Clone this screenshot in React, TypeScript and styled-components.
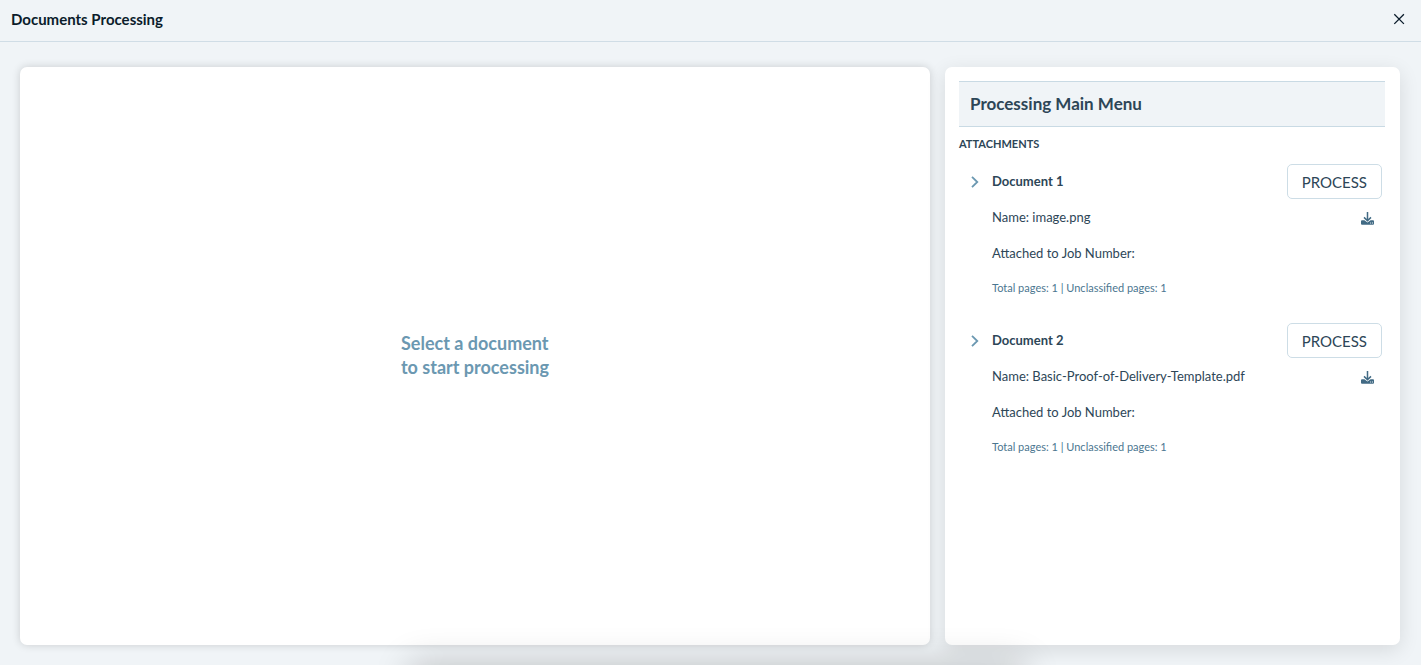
import React from "react";
import styled, { createGlobalStyle } from "styled-components";

const GlobalStyle = createGlobalStyle`
  * { box-sizing: border-box; }
  body {
    margin: 0;
    background: #f0f4f7;
    color: #2d4657;
    font-family: Lato, "Liberation Sans", sans-serif;
    font-size: 13px;
    line-height: 18px;
  }
  h1, h2, h3, p, ul { margin: 0; padding: 0; }
`;

const Page = styled.div`
  display: flex;
  flex-direction: column;
  min-height: 100vh;
  overflow: hidden;
  position: relative;

  /* Shadow of the drawer docked under the bottom edge */
  &::after {
    content: "";
    position: absolute;
    top: 100%;
    left: 29%;
    right: 28%;
    height: 60px;
    box-shadow: 0 0 36px 2px rgba(0, 0, 0, 0.2);
    pointer-events: none;
  }
`;

const Header = styled.header`
  display: flex;
  align-items: center;
  justify-content: space-between;
  height: 42px;
  padding: 0 14px 4px 11px;
  border-bottom: 1px solid #d0dde6;
`;

const Title = styled.h1`
  color: #0b1c2b;
  font-size: 15px;
  font-weight: 700;
`;

const IconButton = styled.button<{ $color: string }>`
  display: flex;
  padding: 0;
  border: 0;
  background: none;
  color: ${(p) => p.$color};
  cursor: pointer;
`;

const Main = styled.main`
  flex: 1;
  display: grid;
  grid-template-columns: 2fr 1fr;
  gap: 15px;
  padding: 25px 21px 20px 20px;
`;

const Panel = styled.section<{ $shadow: string }>`
  min-width: 0;
  border-radius: 7px;
  background: #fff;
  box-shadow: ${(p) => p.$shadow};
`;

const Viewer = styled(Panel)`
  display: flex;
  align-items: center;
  justify-content: center;
  padding-bottom: 2px;
`;

const Hint = styled.p`
  color: #6b98b1;
  font-size: 18px;
  font-weight: 700;
  line-height: 24px;
`;

const Menu = styled(Panel)`
  padding: 14px 15px 14px 14px;
`;

const MenuTitle = styled.h2`
  padding: 11px;
  border: solid #c9dae4;
  border-width: 1px 0;
  background: #f0f4f7;
  font-size: 17px;
  line-height: 22px;
`;

const SectionLabel = styled.h3`
  padding-top: 8px;
  font-size: 11px;
  text-transform: uppercase;
`;

const DocumentList = styled.ul`
  padding-top: 10px;
  list-style: none;
`;

const DocumentItem = styled.li`
  display: grid;
  grid-template-columns: 33px 1fr auto;
  grid-auto-rows: 36px;
  align-items: center;
  padding: 0 3px 15px 0;
`;

const Toggle = styled(IconButton)`
  padding: 1px 0 0 11px;
`;

const DocumentName = styled.h3`
  font-size: 13px;
`;

const Detail = styled.p`
  grid-column: 2;
`;

const PageCount = styled.p`
  grid-column: 2;
  padding-bottom: 2px;
  color: #4b7690;
  font-size: 11px;
`;

const ProcessButton = styled.button`
  align-self: end;
  height: 35px;
  padding: 0 14px;
  border: 1px solid #cddde6;
  border-radius: 5px;
  background: #fff;
  color: #2d4657;
  font: 400 15px Lato, "Liberation Sans", sans-serif;
  cursor: pointer;
`;

const Download = styled(IconButton)`
  justify-self: end;
  padding: 3px 8px 0 0;
`;

const CloseIcon = () => (
  <svg width="16" height="16" viewBox="0 0 16 16" fill="none" stroke="currentColor" strokeWidth="1.3">
    <path d="M3.3 3.3l9.6 9.6M12.9 3.3l-9.6 9.6" />
  </svg>
);

const ChevronIcon = () => (
  <svg width="10" height="12" viewBox="0 0 10 12" fill="none" stroke="currentColor" strokeWidth="1.8">
    <path d="M2 .8l5.3 5.2-5.3 5.2" />
  </svg>
);

const DownloadIcon = () => (
  <svg width="13" height="13" viewBox="0 0 13 13" fill="none">
    <path
      fill="currentColor"
      fillRule="evenodd"
      d="M1 8.3h2.4l3.1 2.3 3.1-2.3H12a1 1 0 0 1 1 1v2.5a1 1 0 0 1-1 1H1a1 1 0 0 1-1-1V9.300a1 1 0 0 1 1-1zm8.200 2.200v.9h.9v-.9zm1.800 0v.9h.9v-.9z"
    />
    <path d="M6.500 0v8.500M3 5.400l3.500 3.300 3.500-3.300" stroke="currentColor" strokeWidth="1.500" />
  </svg>
);

const documents = [
  { title: "Document 1", file: "image.png", total: 1, unclassified: 1 },
  { title: "Document 2", file: "Basic-Proof-of-Delivery-Template.pdf", total: 1, unclassified: 1 },
];

export default function App() {
  return (
    <Page>
      <GlobalStyle />
      <Header>
        <Title>Documents Processing</Title>
        <IconButton $color="#0b1c2b" aria-label="Close">
          <CloseIcon />
        </IconButton>
      </Header>
      <Main>
        <Viewer $shadow="0 0 8px rgba(0, 0, 0, 0.16)">
          <Hint>
            Select a document
            <br />
            to start processing
          </Hint>
        </Viewer>
        <Menu $shadow="0 5px 20px rgba(0, 0, 0, 0.11)">
          <MenuTitle>Processing Main Menu</MenuTitle>
          <SectionLabel>Attachments</SectionLabel>
          <DocumentList>
            {documents.map((doc) => (
              <DocumentItem key={doc.title}>
                <Toggle $color="#6b98b1" aria-label={`Expand ${doc.title}`}>
                  <ChevronIcon />
                </Toggle>
                <DocumentName>{doc.title}</DocumentName>
                <ProcessButton>PROCESS</ProcessButton>
                <Detail>Name: {doc.file}</Detail>
                <Download $color="#416a84" aria-label={`Download ${doc.file}`}>
                  <DownloadIcon />
                </Download>
                <Detail>Attached to Job Number:</Detail>
                <PageCount>
                  Total pages: {doc.total} | Unclassified pages: {doc.unclassified}
                </PageCount>
              </DocumentItem>
            ))}
          </DocumentList>
        </Menu>
      </Main>
    </Page>
  );
}
